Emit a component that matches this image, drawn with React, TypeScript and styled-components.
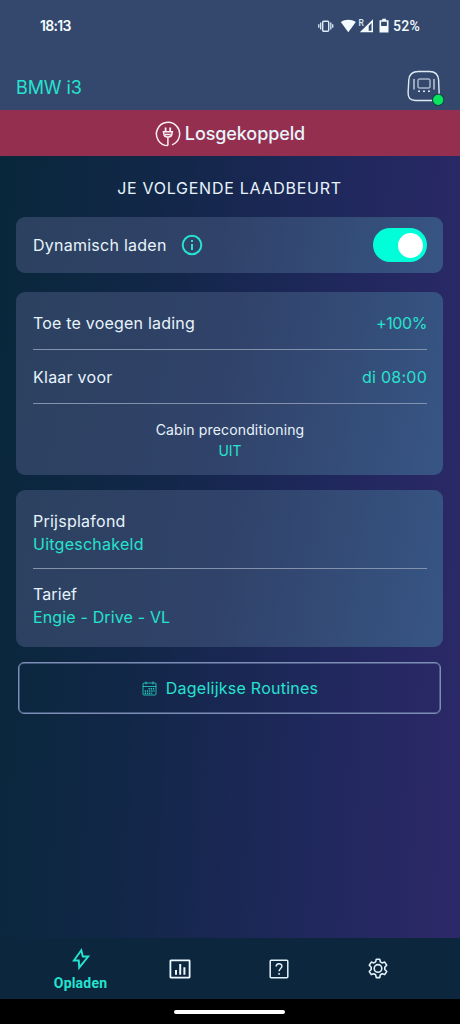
import React from "react";
import styled, { createGlobalStyle } from "styled-components";

const GlobalStyle = createGlobalStyle`
  * { box-sizing: border-box; }
  body { margin: 0; background: #000; }
  svg { display: block; flex: none; }
`;

const mint = "#25e3cf";
const pale = "#e8f4fc";

const Screen = styled.div`
  width: 460px;
  height: 1024px;
  display: flex;
  flex-direction: column;
  overflow: hidden;
  font-family: Inter, "Liberation Sans", sans-serif;
  color: ${pale};
  background: linear-gradient(93deg, #09273b 3%, #13274a 37%, #20285d 70%, #2c2968 98%);
`;

const Header = styled.header`
  height: 110px;
  flex: none;
  background: #34486d;
`;

const StatusBar = styled.div`
  height: 52px;
  padding: 0 40px;
  display: flex;
  align-items: center;
  justify-content: space-between;
  font: 500 14px/20px Roboto, sans-serif;
  color: #f4fbff;
`;

const Clock = styled.span`
  letter-spacing: -0.7px;
  font-family: Inter, sans-serif;
  font-weight: 600;
`;

const StatusIcons = styled.div`
  display: flex;
  align-items: center;
  letter-spacing: 0.3px;
`;

const TitleRow = styled.div`
  height: 58px;
  padding: 13px 16px 0 16px;
  display: flex;
  align-items: center;
  justify-content: space-between;
`;

const Label = styled.span<{ $accent?: boolean; $size?: number; $spacing?: number; $line?: number; $weight?: number }>`
  font-size: ${(p) => p.$size ?? 16}px;
  line-height: ${(p) => p.$line ?? 22}px;
  font-weight: ${(p) => p.$weight ?? 400};
  letter-spacing: ${(p) => p.$spacing ?? 0.25}px;
  color: ${(p) => (p.$accent ? mint : pale)};
  white-space: nowrap;
`;

const Banner = styled.div`
  height: 46px;
  flex: none;
  padding-top: 2px;
  display: flex;
  align-items: center;
  justify-content: center;
  gap: 4px;
  background: #942f50;
`;

const Content = styled.main`
  flex: 1;
  padding: 0 17px 0 16px;
  display: flex;
  flex-direction: column;
`;

const SectionTitle = styled.h1`
  margin: 0;
  height: 61px;
  padding-top: 3px;
  font-size: 16px;
  font-weight: 400;
  line-height: 58px;
  letter-spacing: 0.73px;
  text-align: center;
`;

const Card = styled.section<{ $height: number; $gap: number }>`
  height: ${(p) => p.$height}px;
  margin-bottom: ${(p) => p.$gap}px;
  padding: 0 16px 0 17px;
  flex: none;
  border-radius: 9px;
  background: linear-gradient(100deg, #2c4160 0%, #304269 48%, #375584 100%);
`;

const Row = styled.div<{ $height: number; $line?: boolean; $top?: number }>`
  height: ${(p) => p.$height}px;
  padding-top: ${(p) => p.$top ?? 0}px;
  display: flex;
  align-items: center;
  justify-content: space-between;
  border-bottom: ${(p) => (p.$line ? "1px solid #8292ad" : "none")};
`;

const Inline = styled.div`
  display: flex;
  align-items: center;
  gap: 14px;
`;

const Stack = styled.div<{ $height: number; $top: number; $line?: boolean; $center?: boolean }>`
  height: ${(p) => p.$height}px;
  padding-top: ${(p) => p.$top}px;
  display: flex;
  flex-direction: column;
  align-items: ${(p) => (p.$center ? "center" : "flex-start")};
  border-bottom: ${(p) => (p.$line ? "1px solid #8292ad" : "none")};
`;

const Toggle = styled.button`
  width: 54px;
  height: 34px;
  padding: 0 4px;
  border: 0;
  border-radius: 17px;
  display: flex;
  align-items: center;
  justify-content: flex-end;
  background: #00ffd9;
`;

const Knob = styled.span`
  width: 25px;
  height: 25px;
  border-radius: 50%;
  background: #fff;
`;

const RoutineButton = styled.button`
  height: 52px;
  margin: 0 2px;
  padding: 0 0 0 1px;
  border: 1px solid #7d8db5;
  box-shadow: inset 0 0 0 0.5px #7d8db5;
  border-radius: 6px;
  background: transparent;
  font-family: inherit;
  display: flex;
  align-items: center;
  justify-content: center;
  gap: 9px;
`;

const Nav = styled.nav`
  height: 61px;
  flex: none;
  padding: 0 33px 0 31px;
  display: grid;
  grid-template-columns: repeat(4, 1fr);
  background: #0c263d;
`;

const Tab = styled.div`
  display: flex;
  flex-direction: column;
  align-items: center;
  justify-content: center;
`;

const TabLabel = styled.span`
  margin: 2px 0 -3px;
  font: 700 14px/20px Roboto, sans-serif;
  letter-spacing: 0.2px;
  color: ${mint};
`;

const SystemBar = styled.div`
  height: 25px;
  flex: none;
  padding-right: 1px;
  display: flex;
  align-items: center;
  justify-content: center;
  background: #000;
`;

const HomeHandle = styled.div`
  width: 111px;
  height: 4px;
  border-radius: 2px;
  background: #fff;
`;

const StatusGlyphs = () => (
  <svg width="75" height="18" viewBox="0 0 75 18">
    <g fill="none" stroke="#dcebf7" strokeWidth="1.4">
      <rect x="4.7" y="4.2" width="6" height="10" rx="1" />
      <path d="M2.7 5.500v7M12.800 5.500v7M.8 7.300v3.500M14.700 7.300v3.500" strokeWidth="1.300" />
    </g>
    <path d="M22.800 5.100c4.200-3.200 10.800-3.200 15 0L30.300 15.200z" fill="#f4fbff" />
    <text x="40.600" y="8.500" fontFamily="Roboto" fontSize="8.500" fill="#dcebf7">R</text>
    <path d="M55 2.200v13.100H41.800z" fill="#f4fbff" />
    <path d="M53.500 6v7.800h-2.800V8.900z" fill="#34486d" />
    <path d="M64.200 1.700h3.800v1.500h2.500v12.300h-9V3.200h2.700z" fill="#f4fbff" />
    <path d="M63.100 4.700h5.800v4.300h-5.800z" fill="#34486d" />
  </svg>
);

const ChargerIcon = () => (
  <svg width="37" height="36" viewBox="0 0 37 36" fill="none" stroke="#dfeaf5">
    <path d="M11.500 1.500h11c6 0 8.700 3 9.100 8.500l.5 12.500c.2 5.500-2.100 8-7.500 8H8.500C3.200 30.500.9 28 1.100 22.500L1.800 10C2.200 4.500 5.500 1.500 11.500 1.500Z" strokeWidth="1.400" />
    <rect x="11" y="9" width="12" height="9" rx="1" strokeWidth="1" />
    <path d="M7 9v10.500M27 9v10.500" strokeWidth="1.200" />
    <path d="M11 21.300h2M16 21.300h2M21 21.300h2" strokeWidth="1.500" />
    <circle cx="31.200" cy="29.800" r="5.700" fill="#07e65d" stroke="#17474f" strokeWidth="1.200" />
  </svg>
);

const PlugIcon = () => (
  <svg width="26" height="26" viewBox="0 0 26 26" fill="none" stroke="#fbeef4" strokeWidth="1.500">
    <path d="M12.900 24.600A11.600 11.600 0 1 1 17 23.900" />
    <path d="M10.600 6.500v4M15.200 6.500v4" strokeWidth="1.800" />
    <path d="M7.700 10.700h10.400M8.800 11v1.500c0 2.600 1.400 3.500 4.100 3.500s4.100-.9 4.100-3.500V11M10 13.400h5.800M12.900 16v8.600" />
  </svg>
);

const InfoIcon = () => (
  <svg width="22" height="22" viewBox="0 0 22 22" fill="none" stroke={mint} strokeWidth="2">
    <circle cx="11" cy="11" r="9.300" />
    <path d="M11 10v6M11 6v2" />
  </svg>
);

const CalendarIcon = () => (
  <svg width="15" height="15" viewBox="0 0 15 15" fill="none" stroke={mint} strokeOpacity=".85" strokeWidth=".9">
    <rect x="1" y="2" width="13" height="12" rx="1" />
    <path d="M1 5.500h13M4 .5v3M11 .5v3" />
    <path d="M6.500 7.700h6M2.700 10h9.800M2.700 12.200h7.500" strokeWidth="1.400" strokeDasharray="1.300 .9" />
  </svg>
);

const BoltIcon = () => (
  <svg width="18" height="24" viewBox="0 0 18 24" fill="none" stroke={mint} strokeWidth="1.900">
    <path d="M9.300 3.200 1.900 13.500h4.900l.4 7.200L16.200 9.500h-5.400z" strokeLinejoin="miter" />
  </svg>
);

const ChartIcon = () => (
  <svg width="22" height="20" viewBox="0 0 22 20" fill="none" stroke="#edf7ff" strokeWidth="1.800">
    <rect x="1.400" y="1.400" width="19.200" height="17.200" rx=".5" />
    <path d="M7 11v4.700M11.200 5v10.700M15.400 8.300v7.400" strokeWidth="2" />
  </svg>
);

const HelpIcon = () => (
  <svg width="20" height="20" viewBox="0 0 20 20" fill="none" stroke="#e2f1fa" strokeWidth="1.500">
    <rect x="1.200" y="1.200" width="17.600" height="17.600" rx="1" />
    <path d="M7.200 7.500c0-3.600 5.700-3.700 5.700-.2 0 2.200-2.800 2.200-2.800 5M10.100 14v1.700" />
  </svg>
);

const GearIcon = () => (
  <svg width="20" height="21" viewBox="0 0 20 21" fill="none" stroke="#e2f1fa" strokeWidth="1.600" strokeLinejoin="round">
    <path d="M8.300 1.200h3.400l.7 2.700 1.700 1 2.600-.8 2 3.100-1.900 2v2.300l1.900 2-2 3.100-2.600-.8-1.700 1-.7 2.800H8.300l-.7-2.800-1.700-1-2.600.8-2-3.100 1.900-2V9.200l-1.900-2 2-3.100 2.600.8 1.700-1z" />
    <circle cx="10" cy="10.400" r="3.800" />
  </svg>
);

export default function App() {
  return (
    <>
      <GlobalStyle />
      <Screen>
        <Header>
          <StatusBar>
            <Clock>18:13</Clock>
            <StatusIcons>
              <StatusGlyphs />
              <span>52%</span>
            </StatusIcons>
          </StatusBar>
          <TitleRow>
            <Label $accent $size={18} $spacing={-0.1}>BMW i3</Label>
            <ChargerIcon />
          </TitleRow>
        </Header>
        <Banner>
          <PlugIcon />
          <Label $size={18} $weight={500} $spacing={-0.1}>Losgekoppeld</Label>
        </Banner>
        <Content>
          <SectionTitle>JE VOLGENDE LAADBEURT</SectionTitle>
          <Card $height={56} $gap={19}>
            <Row $height={56}>
              <Inline>
                <Label>Dynamisch laden</Label>
                <InfoIcon />
              </Inline>
              <Toggle role="switch" aria-checked="true"><Knob /></Toggle>
            </Row>
          </Card>
          <Card $height={183} $gap={15}>
            <Row $height={58} $top={5} $line>
              <Label $spacing={0.2}>Toe te voegen lading</Label>
              <Label $spacing={-0.4} $accent>+100%</Label>
            </Row>
            <Row $height={54} $line>
              <Label>Klaar voor</Label>
              <Label $accent>di 08:00</Label>
            </Row>
            <Stack $height={70} $top={16} $center>
              <Label $size={14} $line={20} $spacing={0.15}>Cabin preconditioning</Label>
              <Label $size={14} $line={21} $spacing={0} $accent>UIT</Label>
            </Stack>
          </Card>
          <Card $height={157} $gap={15}>
            <Stack $height={79} $top={20} $line>
              <Label $line={23}>Prijsplafond</Label>
              <Label $line={23} $accent>Uitgeschakeld</Label>
            </Stack>
            <Stack $height={78} $top={14}>
              <Label $line={23} $spacing={0.1}>Tarief</Label>
              <Label $line={23} $spacing={0.15} $accent>Engie - Drive - VL</Label>
            </Stack>
          </Card>
          <RoutineButton>
            <CalendarIcon />
            <Label $accent>Dagelijkse Routines</Label>
          </RoutineButton>
        </Content>
        <Nav>
          <Tab>
            <BoltIcon />
            <TabLabel>Opladen</TabLabel>
          </Tab>
          <Tab><ChartIcon /></Tab>
          <Tab><HelpIcon /></Tab>
          <Tab><GearIcon /></Tab>
        </Nav>
        <SystemBar><HomeHandle /></SystemBar>
      </Screen>
    </>
  );
}
